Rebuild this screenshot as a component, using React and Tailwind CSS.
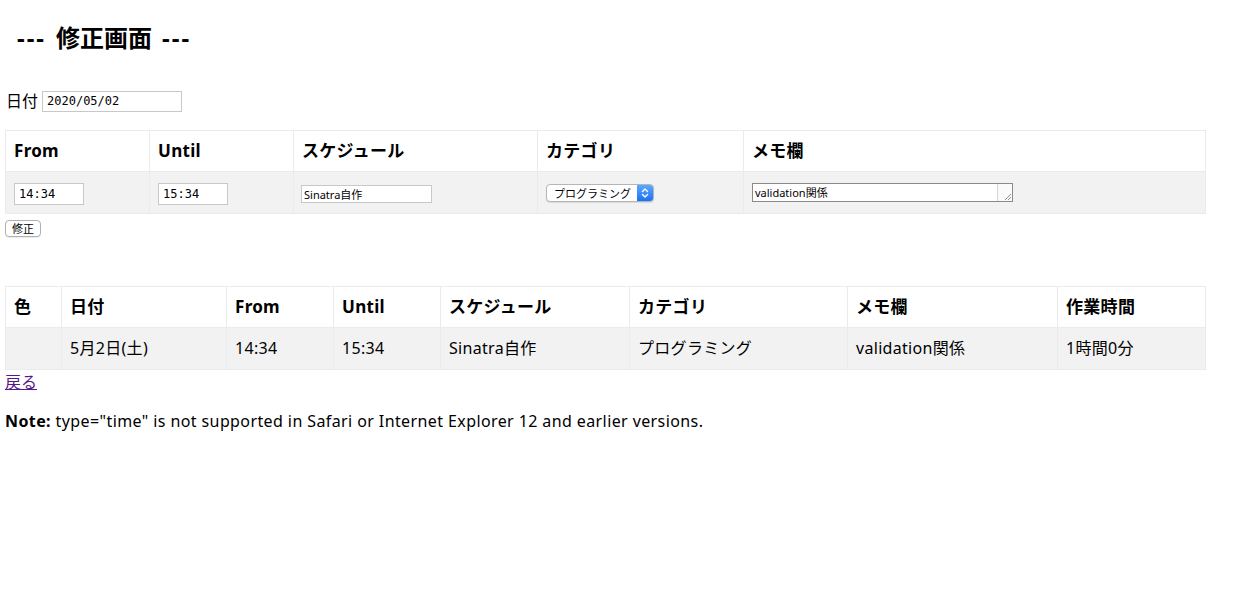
import React from "react";

const FONT = { fontFamily: '"Noto Sans", "Noto Sans CJK JP", sans-serif' };

const editCols = [
  { label: "From", w: "w-[144px]" },
  { label: "Until", w: "w-[144px]" },
  { label: "スケジュール", w: "w-[244px]" },
  { label: "カテゴリ", w: "w-[206px]" },
  { label: "メモ欄", w: "w-[462px]" },
];

const listCols = [
  { label: "色", w: "w-[56px]" },
  { label: "日付", w: "w-[165px]" },
  { label: "From", w: "w-[107px]" },
  { label: "Until", w: "w-[107px]" },
  { label: "スケジュール", w: "w-[189px]" },
  { label: "カテゴリ", w: "w-[218px]" },
  { label: "メモ欄", w: "w-[210px]" },
  { label: "作業時間", w: "w-[148px]" },
];

const listRow = ["", "5月2日(土)", "14:34", "15:34", "Sinatra自作", "プログラミング", "validation関係", "1時間0分"];

function MonoInput({ value, className }) {
  return (
    <input
      readOnly
      defaultValue={value}
      className={`border border-[#c8c8c8] bg-white px-[4px] text-[12px] text-black outline-none font-['DejaVu_Sans_Mono',monospace] ${className}`}
    />
  );
}

function CategorySelect() {
  return (
    <div className="flex h-[18px] w-[108px] items-stretch overflow-hidden rounded-[4px] border border-[#b5b5b5] bg-white shadow-[0_1px_1px_rgba(0,0,0,0.1)]">
      <span className="flex-1 pl-[7px] text-[11px] leading-[17px] text-black">プログラミング</span>
      <span className="flex w-[16px] items-center justify-center bg-gradient-to-b from-[#5ca9fd] to-[#1a6ff3]">
        <svg width="8" height="12" viewBox="0 0 8 12" fill="none" stroke="white" strokeWidth="1.4" strokeLinecap="round" strokeLinejoin="round">
          <path d="M1.5 4.5 4 2l2.5 2.5" />
          <path d="M1.5 7.5 4 10l2.5-2.5" />
        </svg>
      </span>
    </div>
  );
}

function MemoBox() {
  return (
    <div className="flex h-[19px] w-[261px] border border-[#8a8a8a] bg-white">
      <span className="flex-1 pl-[2px] text-[11px] leading-[17px] text-black">validation関係</span>
      <span className="flex w-[15px] items-end justify-end border-l border-[#d6d6d6] bg-[#fafafa]">
        <svg width="10" height="10" viewBox="0 0 10 10" stroke="#7a7a7a" strokeWidth="0.8">
          <path d="M9 3 3 9" />
          <path d="M9 6 6 9" />
        </svg>
      </span>
    </div>
  );
}

export default function App() {
  return (
    <div className="min-h-[611px] bg-white px-[5px] text-black" style={FONT}>
      <h2 className="flex items-center pl-[12px] pt-[20px] text-[24px] font-bold leading-[36px]">
        <span className="tracking-[2px]">---</span>
        <span className="ml-[10px] mr-[10px]">修正画面</span>
        <span className="tracking-[2px]">---</span>
      </h2>

      <div className="mt-[33px] flex items-center gap-[4px]">
        <span className="pl-[1px] text-[16px]">日付</span>
        <MonoInput value="2020/05/02" className="h-[21px] w-[140px] text-[11px]" />
      </div>

      <table className="mt-[17px] w-[1200px] table-fixed border-collapse">
        <thead>
          <tr className="h-[41px] bg-white">
            {editCols.map((c) => (
              <th key={c.label} className={`${c.w} border border-[#ebebeb] px-[8px] text-left text-[17px] font-bold tracking-[0.3px]`}>
                {c.label}
              </th>
            ))}
          </tr>
        </thead>
        <tbody>
          <tr className="h-[42px] bg-[#f2f2f2]">
            <td className="border border-[#ebebeb] px-[8px]">
              <MonoInput value="14:34" className="h-[22px] w-[70px]" />
            </td>
            <td className="border border-[#ebebeb] px-[8px]">
              <MonoInput value="15:34" className="h-[22px] w-[70px]" />
            </td>
            <td className="border border-[#ebebeb] px-[7px]">
              <input
                readOnly
                defaultValue="Sinatra自作"
                className="h-[18px] w-[131px] border border-[#c8c8c8] bg-white px-[2px] text-[11px] text-black outline-none"
              />
            </td>
            <td className="border border-[#ebebeb] px-[8px]">
              <CategorySelect />
            </td>
            <td className="border border-[#ebebeb] px-[8px]">
              <MemoBox />
            </td>
          </tr>
        </tbody>
      </table>

      <button className="mt-[6px] h-[17px] rounded-[4px] border border-[#b0b0b0] bg-white px-[6px] text-[11px] leading-[14px] shadow-[0_1px_1px_rgba(0,0,0,0.08)]">
        修正
      </button>

      <table className="mt-[47px] w-[1200px] table-fixed border-collapse">
        <thead>
          <tr className="h-[41px] bg-white">
            {listCols.map((c) => (
              <th key={c.label + c.w} className={`${c.w} border border-[#ebebeb] px-[8px] text-left text-[17px] font-bold tracking-[0.3px]`}>
                {c.label}
              </th>
            ))}
          </tr>
        </thead>
        <tbody>
          <tr className="h-[42px] bg-[#f2f2f2]">
            {listRow.map((v, i) => (
              <td key={i} className="border border-[#ebebeb] px-[8px] text-[16px] tracking-[0.3px]">
                {v}
              </td>
            ))}
          </tr>
        </tbody>
      </table>

      <a href="#" className="block w-fit text-[16px] leading-[24px] text-[#551a8b] underline">
        戻る
      </a>

      <p className="mt-[15px] text-[16px] leading-[24px] tracking-[0.4px]">
        <span className="font-bold">Note:</span> type="time" is not supported in Safari or Internet Explorer 12 and earlier versions.
      </p>
    </div>
  );
}
